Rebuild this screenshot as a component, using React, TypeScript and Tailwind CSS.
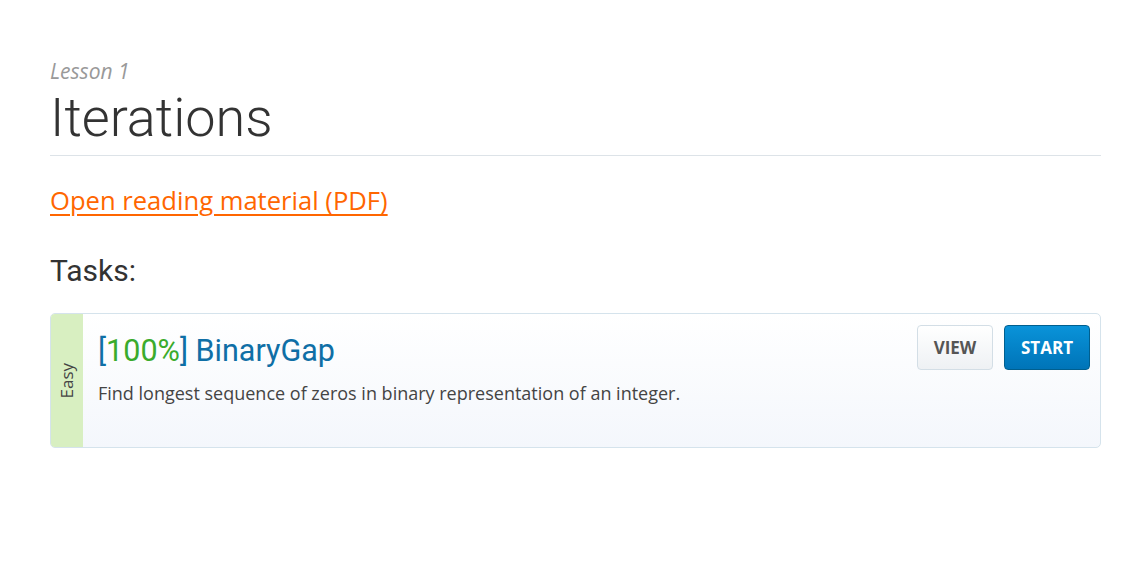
import React from "react";

const openSans = { fontFamily: '"Open Sans", "Liberation Sans", sans-serif' };
const roboto = { fontFamily: 'Roboto, "Liberation Sans", sans-serif' };

type Task = {
  name: string;
  score: number;
  difficulty: string;
  description: string;
};

const tasks: Task[] = [
  {
    name: "BinaryGap",
    score: 100,
    difficulty: "Easy",
    description: "Find longest sequence of zeros in binary representation of an integer.",
  },
];

function TaskCard({ task }: { task: Task }) {
  return (
    <div className="flex h-[135px] overflow-hidden rounded-[5px] border border-[#d5e3ec] bg-gradient-to-b from-white to-[#f4f7fc]">
      {/* difficulty strip */}
      <div className="flex w-[32px] shrink-0 items-center justify-center bg-[#d8efc1]">
        <span
          className="-rotate-90 whitespace-nowrap text-[17px] text-[#444]"
          style={openSans}
        >
          {task.difficulty}
        </span>
      </div>
      <div className="flex flex-1 justify-between pl-[15px] pr-[10px] pt-[11px]">
        <div>
          <h3 className="mt-[6px] text-[30.5px] leading-[40px] text-[#0f6fa6]" style={roboto}>
            [<span className="text-[#3aab2c]">{task.score}%</span>] {task.name}
          </h3>
          <p className="mt-[9px] text-[18px] leading-[26px] text-[#444]" style={openSans}>
            {task.description}
          </p>
        </div>
        <div className="flex gap-[11px]">
          <button
            className="h-[45px] w-[76px] rounded-[4px] border border-[#d3dee6] bg-gradient-to-b from-white to-[#eef1f4] text-[17px] font-bold text-[#555]"
            style={openSans}
          >
            VIEW
          </button>
          <button
            className="h-[45px] w-[86px] rounded-[4px] border border-[#005f8f] bg-gradient-to-b from-[#0a93d9] to-[#0074b8] text-[17px] font-bold text-white"
            style={openSans}
          >
            START
          </button>
        </div>
      </div>
    </div>
  );
}

export default function App() {
  return (
    <div className="min-h-screen bg-white px-[50px] pt-[57px]">
      <div className="w-[1051px]">
        <div className="border-b border-[#dde3e8] pb-[4px]">
          <div className="text-[21px] italic leading-[28px] text-[#999]" style={openSans}>
            Lesson 1
          </div>
          <h1 className="text-[54px] font-light leading-[66px] text-[#333]" style={roboto}>
            Iterations
          </h1>
        </div>
        <a
          href="#"
          className="mt-[27px] inline-block text-[25.6px] leading-[36px] text-[#ff6600] underline underline-offset-[4px]"
          style={openSans}
        >
          Open reading material (PDF)
        </a>
        <h2 className="mt-[33px] text-[30px] leading-[38px] text-[#333]" style={roboto}>
          Tasks:
        </h2>
        <div className="mt-[23px]">
          {tasks.map((t) => (
            <TaskCard key={t.name} task={t} />
          ))}
        </div>
      </div>
    </div>
  );
}
